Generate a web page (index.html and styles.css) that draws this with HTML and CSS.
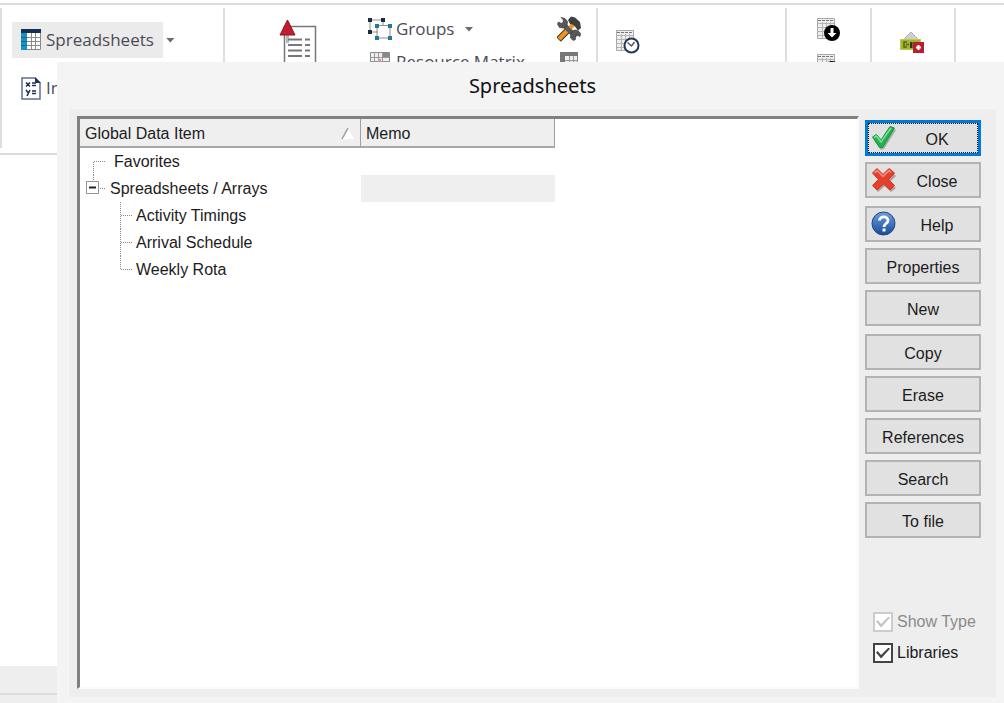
FILE: index.html
```html
<!DOCTYPE html>
<html lang="en">
<head>
<meta charset="utf-8">
<title>Spreadsheets</title>
<link rel="stylesheet" href="styles.css">
</head>
<body>
<svg class="symbols" aria-hidden="true">
  <symbol id="grid" viewBox="0 0 18 22">
    <path fill="#eeeeef" stroke="#a9a9ac" d="M.5.5h17v20H.5z"/>
    <path stroke="#77777b" stroke-dasharray="3 1" d="M1 2.500h16"/>
    <path fill="none" stroke="#b4b4b8" d="M1 5.500h16M1 9.500h16M1 13.500h16M1 17.500h16M5.500 4v16M9.500 4v16M13.500 4v16"/>
  </symbol>
</svg>
<main class="app">
  <header class="ribbon">
    <section class="group group-data">
      <div class="row">
        <button class="tool active">
          <svg width="20" height="22" viewBox="0 0 20 22"><path fill="#fff" stroke="#888" d="M.5.5h19v20H.5z"/><path fill="#1593c5" d="M0 4h6v17H0z"/><path fill="#12304f" d="M0 0h20v4H0z"/><path fill="none" stroke="#8b8b8b" d="M10.500 4v17M14.500 4v17M6 8.500h14M6 12.500h14M6 16.500h14"/><path stroke="#12688c" d="M0 8.500h6M0 12.500h6M0 16.500h6"/></svg>
          <span>Spreadsheets</span>
        </button>
        <button class="caret" aria-label="Spreadsheets menu"></button>
      </div>
      <button class="tool">
        <svg width="20" height="23" viewBox="0 0 20 23"><path fill="#fff" stroke="#60708c" stroke-width="1.500" d="M1 1h13l5 5v16H1z"/><path fill="#1e3157" d="M14 0l6 6h-6z"/><path fill="none" stroke="#1e3157" stroke-width="1.600" d="M5 5.500l4 4M9 5.500l-4 4M11 6h4M11 8.500h4M5 13l2 2.500M9 13l-3 6M11 14h4M11 16.500h4"/></svg>
        <span>In</span>
      </button>
    </section>
    <section class="group group-resources">
      <button class="big" aria-label="Report">
        <svg width="38" height="48" viewBox="0 0 38 48"><path fill="#fff" stroke="#77777a" stroke-width="1.500" d="M5.500 7.500h31V47h-31z"/><path fill="#b9b9bb" d="M7 16h3v8H7z"/><path fill="none" stroke="#77777a" stroke-width="1.800" d="M9 20.500h14M9 26h14M9 31.500h14M9 37h14M26 20.500h5M26 26h5M26 31.500h5M26 37h5"/><path fill="#bf1e2e" stroke="#8d1220" d="M8.500 1L16 16H1z"/></svg>
      </button>
      <div class="stack">
        <div class="row">
          <button class="tool">
            <svg width="24" height="22" viewBox="0 0 24 22"><path fill="none" stroke="#8c8f96" d="M2 2h13v12H2zM9 7.500h13V20H9z"/><path fill="#fff" d="M10 8h11v11H10z"/><path fill="#1c2b4a" d="M0 0h4v4H0zM13 0h4v4h-4zM0 12h4v4H0z"/><path fill="#20789b" d="M7 6h4v4H7zM20 6h4v4h-4zM7 18h4v4H7zM20 18h4v4h-4z"/></svg>
            <span>Groups</span>
          </button>
          <button class="caret" aria-label="Groups menu"></button>
        </div>
        <button class="tool">
          <svg width="24" height="20" viewBox="0 0 24 20"><path fill="#eee" stroke="#88888b" d="M2.500.5h19v18h-19z"/><path fill="#88888b" d="M15 1h6v4h-6z"/><path fill="none" stroke="#98989b" d="M2 5.500h19M2 9.500h19M2 13.500h19M6.500 0v18M10.500 0v18M14.500 0v18"/><path fill="#e09090" d="M10 7h3v3h-3z"/></svg>
          <span>Resource Matrix</span>
        </button>
      </div>
      <div class="stack icons">
        <button class="tool" aria-label="Tools">
          <svg width="24" height="26" viewBox="0 0 24 26"><path stroke="#3c3222" stroke-width="6.500" d="M1.500 23.500L13 12"/><path stroke="#ee951f" stroke-width="4.500" d="M2 23L16 9"/><path fill="#3f3f42" d="M11 4l3-3.500 4 1L23 6l1 6-3 2.500-3.500-4.500L13 8z"/><path stroke="#59595b" stroke-width="5" d="M5 7l14 14"/><path fill="#59595b" stroke="#3a3a3c" stroke-width=".7" d="M4 1.500l4 1 2.500 3-.5 4-3.500 2.500-4-.5-2-3.500 1-2 3 1.500 2-1.500-.5-2.500zM14 17l3-3 4 .5 2.500 3-.5 3-3-1.500-2 1.500.5 3-2 1-3-2.500z"/><path stroke="#ee951f" stroke-width="3" d="M13 12l3-3"/></svg>
        </button>
        <button class="tool" aria-label="Table">
          <svg width="20" height="20" viewBox="0 0 20 20"><path fill="#eee" stroke="#88888b" d="M1.500.5h17v18h-17z"/><path fill="#77777a" d="M1 0h18v4H1zM1 4h5v15H1z"/><path fill="none" stroke="#98989b" d="M6 8.500h13M6 12.500h13M10.500 4v14M14.500 4v14"/></svg>
        </button>
      </div>
    </section>
    <section class="group group-schedule">
      <button class="tool" aria-label="Schedule">
        <svg width="24" height="24" viewBox="0 0 24 24"><use href="#grid" width="18" height="22"/><circle cx="15.500" cy="15.500" r="7" fill="#fff" stroke="#26375a" stroke-width="2"/><path fill="none" stroke="#55555a" stroke-width="1.500" d="M11.500 12.500l4 3.500 3-4"/></svg>
      </button>
    </section>
    <section class="group group-import">
      <button class="tool" aria-label="Import">
        <svg width="24" height="24" viewBox="0 0 24 24"><use href="#grid" width="18" height="22"/><circle cx="15" cy="15" r="8" fill="#000"/><path fill="#fff" d="M13.500 10h3v5h3L15 19.500 10.500 15h3z"/></svg>
      </button>
      <button class="tool" aria-label="Export">
        <svg width="24" height="24" viewBox="0 0 24 24"><use href="#grid" width="18" height="22"/><circle cx="15" cy="15" r="8" fill="#000"/></svg>
      </button>
    </section>
    <section class="group group-cost">
      <button class="tool" aria-label="Costs">
        <svg width="24" height="22" viewBox="0 0 24 22"><path fill="#cfcfd2" stroke="#98989c" stroke-dasharray="2 1" d="M3 9l8-8 8 8z"/><path fill="#a2b52c" stroke="#bcc94d" d="M.5 8.500h20v10H.5z"/><path fill="none" stroke="#56631a" stroke-width="1.500" d="M7 11H4v5h3M6 13.500h3"/><path fill="#2f3710" d="M10 11h2.500v6H10z"/><path fill="#b91e31" d="M13 11h11v11H13z"/><path stroke="#fff" stroke-width="2" d="M18.500 14v5M16 16.500h5"/></svg>
      </button>
    </section>
    <section class="group"></section>
  </header>
  <div class="workspace"></div>
  <footer class="status"></footer>

  <section class="dialog" role="dialog" aria-labelledby="dialog-title">
    <h1 class="dialog-title" id="dialog-title">Spreadsheets</h1>
    <div class="panel">
      <div class="list">
        <table class="tree">
          <thead>
            <tr>
              <th class="col-name"><div class="heading">Global Data Item
                <svg width="14" height="12" viewBox="0 0 14 12"><path fill="#fff" d="M7 0l6 11H1z"/><path fill="#efefef" d="M7 2L3 10V0z"/><path stroke="#a0a0a0" stroke-width="1.500" d="M7 0L1 11"/></svg></div></th>
              <th class="col-memo">Memo</th>
            </tr>
          </thead>
          <tbody>
            <tr><td><div class="node"><svg width="30" height="27"><path class="dots" d="M13.500 27V13.500H26"/></svg><span class="root">Favorites</span></div></td><td></td></tr>
            <tr><td><div class="node"><svg width="30" height="27"><path class="dots" d="M13.500 0v8M20 13.500h6"/><path fill="#fff" stroke="#929292" d="M6.500 6.500h12v12h-12z"/><path stroke="#222" stroke-width="2" d="M9 12.500h7"/></svg><span>Spreadsheets / Arrays</span></div></td><td class="shaded"></td></tr>
            <tr><td><div class="node"><svg width="56" height="27"><path class="dots" d="M40.500 0v27M41 13.500h11"/></svg><span>Activity Timings</span></div></td><td></td></tr>
            <tr><td><div class="node"><svg width="56" height="27"><path class="dots" d="M40.500 0v27M41 13.500h11"/></svg><span>Arrival Schedule</span></div></td><td></td></tr>
            <tr><td><div class="node"><svg width="56" height="27"><path class="dots" d="M40.500 0v13.500H52"/></svg><span>Weekly Rota</span></div></td><td></td></tr>
          </tbody>
        </table>
      </div>
      <aside class="actions">
        <div class="button-set">
          <button class="action default"><svg width="26" height="26" viewBox="0 0 26 26"><path fill="#7f8b80" opacity=".6" d="M3 15l3-2 5 5L22 4l3 1-12 19-3 1z"/><path fill="#22b14c" stroke="#159440" d="M1.500 12l4-2.500L10 15 19 1.500l4.500 1.500L11.500 22.500H8.500z"/><path fill="none" stroke="#7be09a" stroke-width="1.500" d="M3 12.500l2.500-1.500L10 17 20 3"/></svg><span>OK</span></button>
          <button class="action"><svg width="26" height="26" viewBox="0 0 26 26"><path fill="#8d7775" opacity=".6" d="M6 5l8 6 6-7 5 5-6 6 6 6-5 4-6-6-7 6-4-5 7-6z"/><path fill="#e6402d" stroke="#cc3322" d="M6 1.500l6 6 6-6L23.500 6l-6 6.500 6 6L19 23l-6.500-6L6 23l-4.500-4.500 6-6L1.500 6z"/><path fill="none" stroke="#f59488" stroke-width="1.500" d="M3.500 6L6 3.500l6 6 6-6 2 2"/></svg><span>Close</span></button>
        </div>
        <div class="button-set">
          <button class="action"><svg width="26" height="26" viewBox="0 0 26 26"><defs><linearGradient id="ball" x2="0" y2="1"><stop stop-color="#6f9fdd"/><stop offset="1" stop-color="#174c9c"/></linearGradient></defs><circle cx="12.500" cy="12.500" r="11.500" fill="url(#ball)" stroke="#1d4684"/><path fill="none" stroke="#fff" stroke-width="2.800" d="M8.500 9.500c0-5 8.500-4.500 8.500 0 0 3-4 3-4 6.500"/><path fill="#fff" d="M11.500 17.500h3v3h-3z"/></svg><span>Help</span></button>
          <button class="action">Properties</button>
          <button class="action">New</button>
        </div>
        <div class="button-set">
          <button class="action">Copy</button>
          <button class="action">Erase</button>
          <button class="action">References</button>
          <button class="action">Search</button>
          <button class="action">To file</button>
        </div>
        <div class="options">
          <label class="option disabled"><input type="checkbox" checked disabled>Show Type</label>
          <label class="option"><input type="checkbox" checked>Libraries</label>
        </div>
      </aside>
    </div>
  </section>
</main>
</body>
</html>
```
FILE: styles.css
```css
* { box-sizing: border-box; }
body { margin: 0; background: #fff; }
button { border: 0; padding: 0; background: none; color: inherit; font: inherit; }
svg { flex: none; display: block; }
.symbols { position: absolute; width: 0; height: 0; }

.app {
  position: relative;
  display: flex;
  flex-direction: column;
  min-height: 100vh;
  overflow: hidden;
}

/* Ribbon */
.ribbon {
  display: flex;
  height: 152px;
  margin-top: 3px;
  padding: 3px 0 5px;
  border-top: 2px solid #dcdcdc;
  border-bottom: 2px solid #dcdcdc;
  color: #4b4b55;
  font: 17px/24px "Open Sans", "Noto Sans", sans-serif;
}
.group { flex: none; border-left: 2px solid #dedede; }
.group:last-child { flex: 1; }
.row { display: flex; align-items: center; }
.tool { display: flex; align-items: center; gap: 5px; white-space: nowrap; }
.stack { display: flex; flex-direction: column; gap: 9px; }
.stack .tool { height: 24px; gap: 4px; }
.caret { width: 9px; height: 5px; background: #6b6b70; clip-path: polygon(0 0, 100% 0, 50% 100%); }

.group-data { width: 223px; padding: 14px 10px; }
.group-data .tool { height: 36px; padding: 0 9px; }
.group-data .row { gap: 3px; margin-bottom: 12px; }
.active { background: #ebebeb; }

.group-resources { display: flex; width: 373px; padding: 9px 0 0 54px; }
.group-resources .big { align-self: flex-start; padding-top: 2px; width: 89px; }
.group-resources .row { gap: 10px; }
.stack.icons { margin-left: auto; padding-right: 15px; align-items: center; }
.group-schedule { width: 189px; padding: 22px 18px; }
.group-import { display: flex; flex-direction: column; gap: 12px; width: 85px; padding: 10px 30px; }
.group-cost { width: 84px; padding: 23px 28px; }

.workspace { flex: 1; }
.status { height: 37px; background: #eee; border-bottom: 8px solid #eee; box-shadow: inset 0 -2px #dcdcdc; }

/* Dialog lying over the application */
.dialog {
  position: absolute;
  inset: 62px 0 0 57px;
  display: flex;
  flex-direction: column;
  padding: 0 8px 6px 12px;
  background: #f4f4f4;
}
.dialog-title {
  margin: 0;
  padding: 9px 0 8px;
  color: #111;
  font: 400 20px/30px "Noto Sans", sans-serif;
  text-align: center;
}
.panel {
  flex: 1;
  display: flex;
  gap: 6px;
  padding: 7px 15px 8px 8px;
  background: #eee;
  color: #1c1c1c;
  font: 16px/24px "Liberation Sans", Arial, sans-serif;
}
.list {
  flex: 1;
  background: #fff;
  border: 2px solid #fafafa;
  border-top: 3px solid #808080;
  border-left: 3px solid #808080;
}
.tree { border-collapse: separate; border-spacing: 0; table-layout: fixed; width: 475px; }
.tree th {
  height: 29px;
  padding: 2px 5px 0;
  background: #efefef;
  border-right: 1px solid #a0a0a0;
  border-bottom: 2px solid #a8a8a8;
  font-weight: 400;
  text-align: left;
}
.col-name { width: 281px; }
.heading { display: flex; align-items: center; justify-content: space-between; }
.tree td { height: 27px; padding: 0; }
.tree .shaded { background: #efefef; }
.node { display: flex; align-items: center; height: 27px; }
.root { margin-left: 4px; }
.dots { fill: none; stroke: #8a8a8a; stroke-dasharray: 1 1; }

.actions { display: flex; flex-direction: column; gap: 8px; width: 116px; padding-top: 4px; }
.button-set { display: flex; flex-direction: column; gap: 6px; }
.action {
  display: flex;
  align-items: center;
  justify-content: center;
  height: 36px;
  padding: 3px 4px 0;
  background: #e1e1e1;
  border: 2px solid #b3b3b3;
}
.action svg { margin-top: -3px; }
.action span { flex: 1; padding-left: 2px; text-align: center; }
.action.default { border: 3px solid #0078d7; padding: 3px 3px 0; outline: 1px dotted #111; outline-offset: -4px; }

.options { display: flex; flex-direction: column; gap: 7px; margin-top: auto; padding: 0 0 24px 8px; }
.option { display: flex; align-items: center; gap: 4px; white-space: nowrap; }
.option input {
  appearance: none;
  flex: none;
  width: 20px;
  height: 20px;
  margin: 0;
  display: grid;
  place-items: center;
  background: #fff;
  border: 2px solid #444;
}
.option input::before {
  content: "";
  width: 14px;
  height: 11px;
  background: #444;
  clip-path: polygon(0 45%, 12% 32%, 36% 68%, 90% 0, 100% 12%, 36% 100%);
}
.disabled { color: #8a8a8a; }
.disabled input { border-color: #ccc; }
.disabled input::before { background: #c4c4c4; }
```
